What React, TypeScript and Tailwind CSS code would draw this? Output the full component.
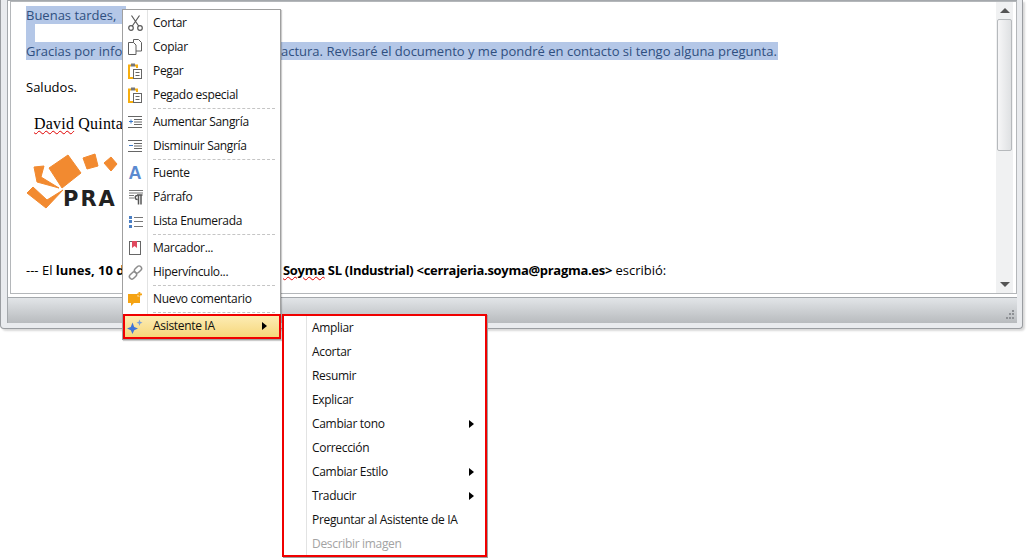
const ui = 'font-["Open_Sans",sans-serif]'

function Scissors() {
  return (
    <svg width="15" height="16" viewBox="0 0 15 16" fill="none" stroke="#5a5a5a" strokeWidth="1.200">
      <circle cx="3" cy="13" r="2.300" />
      <circle cx="12" cy="13" r="2.300" />
      <path d="M4.300 11 11.500 .5M10.700 11 3.500 .5" />
    </svg>
  )
}

function Copy() {
  return (
    <svg width="14" height="16" viewBox="0 0 14 16" fill="#fff" stroke="#5f5f5f" strokeWidth="1">
      <path d="M5.500.5h5l3 3v8.500h-8z" />
      <path d="M.5 3.500h5l2.500 2.500v9.500h-7.500z" />
    </svg>
  )
}

function Paste() {
  return (
    <svg width="14" height="16" viewBox="0 0 14 16" fill="none">
      <path d="M3 2.500H1v12.500h4" stroke="#f7ae0f" strokeWidth="2" />
      <path d="M7 2.500h2V5" stroke="#f7ae0f" strokeWidth="2" />
      <rect x="3" y="0.500" width="4" height="3" fill="#777" />
      <rect x="5.500" y="6.500" width="8" height="9" fill="#fff" stroke="#666" />
      <path d="M7.500 9.500h4M7.500 12.500h4" stroke="#666" />
    </svg>
  )
}

function Indent({ decrease }: { decrease?: boolean }) {
  return (
    <svg width="14" height="12" viewBox="0 0 14 12" fill="none" stroke="#666">
      <path d="M0 .5h14M6 3.500h8M6 6h8M6 8.500h8M0 11.500h14" />
      <path d={decrease ? 'M1 5.500h4' : 'M1 5.500h4M3 3.500v4'} stroke="#3b78c8" />
    </svg>
  )
}

function ParagraphIcon() {
  return (
    <svg width="15" height="15" viewBox="0 0 15 15" fill="none">
      <path d="M1 .5h14M1 3h14M1 5.500h5M1 8h5" stroke="#777" />
      <path d="M9 5h5.500M9.500 5.500c-3 0-3 4 0 4M10.500 5v9.500M13 5v9.500" stroke="#555" strokeWidth="1.500" />
    </svg>
  )
}

function ListIcon() {
  return (
    <svg width="15" height="13" viewBox="0 0 15 13">
      <path d="M1 1h3v3h-3zM1 5h3v3h-3zM1 10h3v3h-3z" fill="#4b7fc4" />
      <path d="M6 2.500h9M6 6.500h9M6 11.500h9" stroke="#777" />
    </svg>
  )
}

function Bookmark() {
  return (
    <svg width="12" height="14" viewBox="0 0 12 14" fill="#fff">
      <rect x="0.500" y="0.500" width="11" height="13" stroke="#666" />
      <path d="M3 0h5v7L5.500 5 3 7z" fill="#e04a5f" />
    </svg>
  )
}

function LinkIcon() {
  return (
    <svg width="15" height="15" viewBox="0 0 15 15" fill="none" stroke="#8c8c8c" strokeWidth="1.500">
      <rect x="7.500" y="0.500" width="5" height="8" rx="2.500" transform="rotate(45 10 4.500)" />
      <rect x="2.500" y="6.500" width="5" height="8" rx="2.500" transform="rotate(45 5 10.500)" />
    </svg>
  )
}

function Comment() {
  return (
    <svg width="14" height="14" viewBox="0 0 14 14">
      <path d="M0 2h9.500v2.500h2.500V11H6l-3 3v-3H0z" fill="#f5a313" />
      <path d="M10.500 0h1.800v1.500h1.700v1.700h-1.700v1.300h-1.800V3.200H9V1.500h1.500z" fill="#f5a313" />
    </svg>
  )
}

function Sparkle() {
  return (
    <svg width="16" height="16" viewBox="0 0 16 16">
      <path d="M5.500 4.500 7.200 9l3.800 1.500-3.800 1.700L5.500 16l-1.700-3.800L0 10.500 3.800 9z" fill="#3f74d8" />
      <path d="M12.500 1.500 13.300 3.800 15.500 4.700 13.300 5.500 12.500 8 11.700 5.500 9.500 4.700 11.700 3.800z" fill="#7a9fd8" />
    </svg>
  )
}

function Arrow() {
  return (
    <svg width="5" height="8" viewBox="0 0 5 8">
      <path d="M0 0 5 4 0 8z" fill="#000" />
    </svg>
  )
}

function Sep() {
  return (
    <div className="h-[3px] pl-[30px] pr-[5px] pt-px">
      <div className="border-t border-dashed border-[#c5c5c5]" />
    </div>
  )
}

function Item({ icon, label }: { icon: React.ReactNode; label: string }) {
  return (
    <div className="flex h-6 items-center">
      <span className="flex w-[24px] justify-center">{icon}</span>
      <span className="pl-[6px] text-[12px] tracking-[-0.32px] text-[#111]">{label}</span>
    </div>
  )
}

function SubItem({ label, more, off }: { label: string; more?: boolean; off?: boolean }) {
  return (
    <div className="flex h-6 items-center justify-between pl-[28px] pr-[11px]">
      <span className={`text-[12px] tracking-[-0.32px] ${off ? 'text-[#a3a3a3]' : 'text-[#111]'}`}>{label}</span>
      {more && <Arrow />}
    </div>
  )
}

function Logo() {
  return (
    <div className="relative mt-[16px] h-[60px]">
      <svg width="96" height="60" viewBox="0 0 96 60" fill="#f28a30" stroke="#f28a30" strokeLinejoin="round">
        <path d="M23 18 42 5 55 23 36 38z" />
        <path d="M57 8 69 4 72 16 61 19z" />
        <path d="M78 13 85 7 91 14 85 21z" />
        <path d="M8 17 18 16 15 27 33 38 11 32z" />
        <path d="M1 43 7 37 21 50 37 40 20 58z" />
      </svg>
      <span className="absolute left-[37px] top-[37px] font-['DejaVu_Sans',sans-serif] text-[21px] leading-[24px] font-bold tracking-[2px] text-[#222]">
        PRA
      </span>
    </div>
  )
}

export default function App() {
  return (
    <div className={`relative h-[558px] w-[1027px] overflow-hidden bg-white ${ui}`}>
      {/* Message window */}
      <div className="flex h-[329px] w-[1023px] flex-col rounded-b-[4px] border border-t-0 border-[#9a9da1] bg-[#e9ebee] shadow-[2px_2px_2px_rgba(0,0,0,0.15)]">
        <div className="ml-[6px] mr-[5px] h-[298px] border-x-0 border-b border-l border-t border-[#a4a8ac] bg-white pb-[3px] pl-[2px]">
          <div className="flex h-full border border-r border-[#b4b7ba]">
            <div className="flex-1 overflow-hidden pl-[15px] pt-[4px] text-[13px] leading-[18px] text-black">
              <div className="w-[100px] bg-[#b4c7e7] text-[#2f4f80]">Buenas tardes,</div>
              <div className="h-[18px] w-[9px] bg-[#b4c7e7]" />
              <div className="w-[752px] whitespace-nowrap bg-[#b4c7e7] text-[#2f4f80]">
                <span className="inline-block w-[255px] align-top">Gracias por info</span>
                <span>actura. Revisaré el documento y me pondré en contacto si tengo alguna pregunta.</span>
              </div>
              <div className="mt-[18px]">Saludos.</div>
              <div className="mt-[18px] pl-[8px] font-['Liberation_Serif',serif] text-[16px] leading-[20px] tracking-[0.2px]">
                <span className="underline decoration-[#e00000] decoration-wavy decoration-1">David</span> Quinta
              </div>
              <Logo />
              <div className="mt-[51px] whitespace-nowrap">
                <span className="inline-block w-[257px] align-top">
                  --- El <b>lunes, 10 d</b>
                </span>
                <b className="tracking-[-0.3px]">
                  <span className="underline decoration-[#e00000] decoration-wavy decoration-1">Soyma</span> SL (Industrial) &lt;cerrajeria.soyma@pragma.es&gt;
                </b>{' '}
                escribió:
              </div>
            </div>
            {/* Scrollbar */}
            <div className="mr-[3px] flex w-[17px] flex-col items-center bg-[#f0f1f2]">
              <div className="flex h-[17px] items-center justify-center">
                <div className="border-x-[5px] border-b-[5px] border-x-transparent border-b-[#555]" />
              </div>
              <div className="h-[132px] w-[15px] rounded-[2px] border border-[#b6b9bc] bg-gradient-to-r from-[#f6f6f7] to-[#dfe1e3]" />
              <div className="flex-1" />
              <div className="flex h-[17px] items-center justify-center">
                <div className="border-x-[5px] border-t-[5px] border-x-transparent border-t-[#555]" />
              </div>
            </div>
          </div>
        </div>
        {/* Status bar */}
        <div className="ml-[6px] mr-[5px] flex h-[25px] items-end justify-end border-l border-[#a4a8ac] bg-gradient-to-b from-[#e2e5e8] to-[#b8bbbe] p-[2px]">
          <svg width="12" height="12" viewBox="0 0 12 12" fill="#8e9195">
            <path d="M9 1h2v2H9zM6 4h2v2H6zM9 4h2v2H9zM3 8h2v2H3zM6 8h2v2H6zM9 8h2v2H9z" />
          </svg>
        </div>
      </div>

      {/* Context menu */}
      <div className="absolute left-[122px] top-[9px] h-[331px] w-[159px] border border-[#a0a0a0] bg-white py-px shadow-[1px_1px_1px_rgba(0,0,0,0.2)]">
        <div className="absolute bottom-0 left-[24px] top-0 w-px bg-[#e2e3e3]" />
        <div className="relative">
          <Item icon={<Scissors />} label="Cortar" />
          <Item icon={<Copy />} label="Copiar" />
          <Item icon={<Paste />} label="Pegar" />
          <Item icon={<Paste />} label="Pegado especial" />
          <Sep />
          <Item icon={<Indent />} label="Aumentar Sangría" />
          <Item icon={<Indent decrease />} label="Disminuir Sangría" />
          <Sep />
          <Item icon={<span className="font-['Liberation_Sans',sans-serif] text-[18px] leading-none font-bold text-[#5b8ad0]">A</span>} label="Fuente" />
          <Item icon={<ParagraphIcon />} label="Párrafo" />
          <Item icon={<ListIcon />} label="Lista Enumerada" />
          <Sep />
          <Item icon={<Bookmark />} label="Marcador..." />
          <Item icon={<LinkIcon />} label="Hipervínculo..." />
          <Sep />
          <Item icon={<Comment />} label="Nuevo comentario" />
          <Sep />
          <div className="flex h-6 items-center justify-between bg-gradient-to-b from-[#fdeeb8] to-[#f6d677] pr-[13px]">
            <span className="flex items-center">
              <span className="flex w-[24px] justify-center"><Sparkle /></span>
              <span className="pl-[6px] text-[12px] tracking-[-0.32px] text-[#111]">Asistente IA</span>
            </span>
            <Arrow />
          </div>
        </div>
      </div>
      <div className="absolute left-[123px] top-[314px] h-[25px] w-[158px] border-[2px] border-[#f00000]" />

      {/* AI submenu */}
      <div className="absolute left-[282px] top-[314px] h-[243px] w-[205px] border-[2px] border-[#f00000] bg-white shadow-[1px_1px_0_#a0a0a0]">
        <div className="absolute bottom-0 left-[22px] top-0 w-px bg-[#e2e3e3]" />
        <div className="relative">
          <SubItem label="Ampliar" />
          <SubItem label="Acortar" />
          <SubItem label="Resumir" />
          <SubItem label="Explicar" />
          <SubItem label="Cambiar tono" more />
          <SubItem label="Corrección" />
          <SubItem label="Cambiar Estilo" more />
          <SubItem label="Traducir" more />
          <SubItem label="Preguntar al Asistente de IA" />
          <SubItem label="Describir imagen" off />
        </div>
      </div>
    </div>
  )
}
